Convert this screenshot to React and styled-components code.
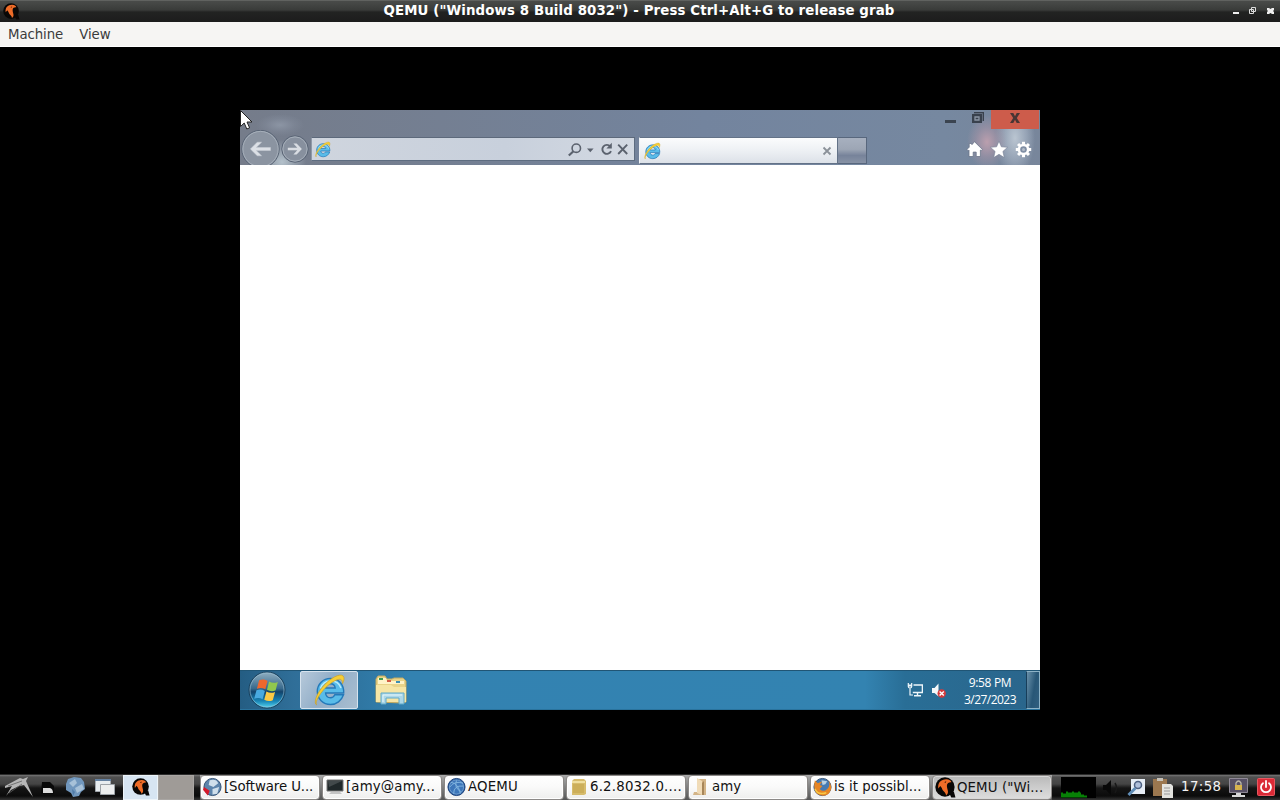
import React from 'react';
import styled, { createGlobalStyle, css } from 'styled-components';

const GlobalStyle = createGlobalStyle`
  * { box-sizing: border-box; }
  html, body { margin: 0; padding: 0; background: #000; overflow: hidden; }
  svg { display: block; flex: none; }
`;

const Desktop = styled.div`
  width: 1280px;
  height: 800px;
  display: flex;
  flex-direction: column;
  background: #000;
  font-family: "DejaVu Sans", sans-serif;
  font-size: 13.33px;
`;

/* ---------- host window ---------- */

const TitleBar = styled.header`
  height: 22px;
  flex: none;
  display: grid;
  grid-template-columns: 60px 1fr 60px;
  align-items: center;
  padding: 0 5px 0 3px;
  color: #fff;
  background: linear-gradient(#777976 0, #494b49 1px, #464846 3px, #393b39 10px, #222322 12px, #1c1c1c 22px);
`;

const WindowTitle = styled.h1`
  margin: 0;
  font-size: 13.33px;
  font-weight: bold;
  letter-spacing: 0.12px;
  line-height: 21px;
  height: 22px;
  text-align: center;
  white-space: nowrap;
`;

const WindowControls = styled.div`
  display: flex;
  justify-content: flex-end;
  padding-bottom: 2px;
`;

const MenuBar = styled.nav`
  height: 25px;
  flex: none;
  display: flex;
  align-items: center;
  gap: 16px;
  padding: 1px 8px 0;
  color: #3a3b3b;
  background: #f6f5f3;
  border-bottom: 1px solid #fff;
`;

const MenuItem = styled.span`
  line-height: 20px;
  letter-spacing: -0.08px;
`;

const Display = styled.main`
  height: 727px;
  flex: none;
  padding-top: 63px;
  display: flex;
  justify-content: center;
  align-items: flex-start;
`;

const Guest = styled.div`
  position: relative;
  width: 800px;
  height: 600px;
  display: flex;
  flex-direction: column;
`;

const Pointer = styled.svg`
  position: absolute;
  left: 0;
  top: 0;
`;

/* ---------- browser ---------- */

const Chrome = styled.section`
  height: 55px;
  flex: none;
  display: flex;
  flex-direction: column;
  overflow: hidden;
  background:
    radial-gradient(ellipse 24px 11px at 40px 15px, #8c95a4 0, #8790a060 60%, transparent 100%),
    radial-gradient(ellipse 24px 22px at 42px 52px, #b4c1cb 0, transparent 100%),
    radial-gradient(ellipse 20px 27px at 747px 32px, #bb9fae 0, #ab95a780 55%, transparent 100%),
    radial-gradient(ellipse 20px 38px at 775px 28px, #bac5d1 0, #a3b0c1aa 60%, transparent 100%),
    linear-gradient(90deg, #757c8a, #747f92 25%, #73849e 58%, #7688a0 88%, #78869b);
`;

const CaptionRow = styled.div`
  height: 20px;
  flex: none;
  display: flex;
  justify-content: flex-end;
  align-items: flex-start;
  padding-right: 1px;
`;

const CloseButton = styled.div`
  width: 48px;
  height: 19px;
  display: flex;
  justify-content: center;
  padding-top: 3px;
  background: #cd5c4b;
`;

const NavRow = styled.div`
  height: 35px;
  flex: none;
  display: flex;
  align-items: flex-start;
  padding-left: 1px;
`;

const NavButtons = styled.div`
  display: flex;
  gap: 1px;
`;

const AddressBar = styled.div`
  width: 324px;
  height: 24px;
  margin: 7px 4px 0 2px;
  display: flex;
  align-items: center;
  justify-content: space-between;
  padding: 1px 5px 0 2px;
  background: linear-gradient(90deg, #cfd5de, #c8d0dc 60%, #d3d9e2);
  border: 1px solid #5d6c80;
  border-top-color: #5d697b;
  border-left-color: #8f99a8;
`;

const BrowserTab = styled.div`
  width: 199px;
  height: 27px;
  margin-top: 7px;
  display: flex;
  align-items: center;
  justify-content: space-between;
  padding: 0 5px 0 3px;
  border: 1px solid #637287;
  border-left-color: #f0f3f6;
  background: linear-gradient(#fbfcfd, #eceff3 55%, #dce1e8);
`;

const NewTab = styled.div`
  width: 29px;
  height: 27px;
  margin-top: 7px;
  border: 1px solid #58677d;
  border-left: 0;
  background: linear-gradient(#a7b0bf, #9da6b5 45%, #77839a 70%, #8792a5);
`;

const Tools = styled.div`
  margin: 11px 8px 0 auto;
  display: flex;
  gap: 7px;
`;

const Page = styled.div`
  flex: 1;
  background: #fff;
`;

/* ---------- guest taskbar ---------- */

const GuestBar = styled.footer`
  height: 40px;
  flex: none;
  display: flex;
  border-top: 1px solid #205575;
  border-bottom: 1px solid #2a739d;
  background: linear-gradient(90deg, #245d83 0, #306f99 55px, #2f76a2 120px, #3382b1 170px, #3383b1 625px, #296e96 665px, #2a658b 100%);
`;

const StartButton = styled.div`
  width: 60px;
  padding: 0 0 0 8px;
`;

const PinnedApp = styled.div`
  width: ${(p) => (p.$active ? 58 : 66)}px;
  display: flex;
  justify-content: center;
  align-items: center;
  ${(p) => p.$active && css`
    border: 1px solid #d6e3ee;
    border-radius: 2px;
    background: linear-gradient(120deg, #b6c9da, #92aec8 45%, #a9bed0);
  `}
`;

const GuestTray = styled.div`
  margin-left: auto;
  display: flex;
  align-items: center;
  gap: 7px;
`;

const GuestClock = styled.div`
  width: 72px;
  padding-top: 1px;
  text-align: center;
  color: #fff;
  font: 12px/17px "Open Sans", "Noto Sans", sans-serif;
  letter-spacing: -0.53px;
`;

const ClockTime = styled.div`
  letter-spacing: -0.35px;
`;

const ShowDesktop = styled.div`
  width: 14px;
  align-self: stretch;
  margin-left: -7px;
  border: 1px solid #8db2c6;
  border-left-color: #173e5a;
  background: linear-gradient(100deg, #6a91aa, #285777 55%, #315f7f);
`;

/* ---------- host panel ---------- */

const Panel = styled.footer`
  height: 26px;
  flex: none;
  display: flex;
  color: #111;
  border-top: 1px solid #2c2c2c;
  background: linear-gradient(#777, #505050 2px, #444 9px, #151515 13px, #0b0b0b 21px, #353535);
`;

const Launchers = styled.div`
  width: 123px;
  display: flex;
  align-items: center;
  padding-left: 5px;
`;

const Workspace = styled.div`
  width: ${(p) => (p.$active ? 35 : 36)}px;
  display: flex;
  align-items: center;
  justify-content: center;
  padding-bottom: 2px;
  background: ${(p) => (p.$active ? '#d7e5f2' : '#9f9b97')};
  border: 1px solid ${(p) => (p.$active ? '#edf4f9' : '#a9a6a3')};
`;

const TaskList = styled.div`
  display: flex;
  gap: 2px;
  margin-left: 6px;
  background: linear-gradient(#aaa, #555);
`;

const Task = styled.div`
  width: 120px;
  height: 25px;
  display: flex;
  align-items: center;
  gap: ${(p) => p.$gap ?? 2}px;
  padding: ${(p) => (p.$active ? '1px' : '0')} 2px ${(p) => (p.$active ? '1px' : '2px')};
  white-space: nowrap;
  border: 1px solid #8c8987;
  border-radius: 4px;
  background: ${(p) => (p.$active ? 'linear-gradient(#b9b9b9, #d0d0d0 60%, #dddddd)' : 'linear-gradient(#fff, #fafafa 45%, #eeeeed)')};
  box-shadow: inset 0 0 0 1px ${(p) => (p.$active ? '#d8d8d8' : '#fff')};
`;

const TaskLabel = styled.span`
  line-height: 20px;
  letter-spacing: ${(p) => p.$spacing ?? 0}px;
`;

const HostTray = styled.div`
  flex: 1;
  display: flex;
  align-items: center;
  padding: 0 5px 0 8px;
`;

const HostClock = styled.time`
  width: 47px;
  margin-left: 7px;
  padding-bottom: 2px;
  color: #f4f4f4;
  letter-spacing: 0.4px;
`;

const PowerButton = styled.div`
  margin-left: auto;
  padding-bottom: 1px;
`;

/* ---------- drawings ---------- */

const QemuIcon = ({ size = 20 }) => (
  <svg width={size} height={size} viewBox="0 0 20 20">
    <circle cx="9.5" cy="9.5" r="9.2" fill="#090706" />
    <path d="M13 14h5l1.5 5.5h-4z" fill="#090706" />
    <path d="M3.2 11C2.2 5.5 6 2 11 2.2c2.4.1 4.4 1.2 4.6 2.8-2.2-.3-4 .8-4.2 2.6-.3 2 .5 3.6.9 5.8.3 1.8-.3 3.3-1.8 4.1 0-3-3.3-3.6-4-7L5 8.5z" fill="#ee6c28" />
    <path d="M8.8 4.9l2-1-.6 1.8z" fill="#502006" />
  </svg>
);

const IeIcon = ({ size }) => (
  <svg width={size} height={size} viewBox="0 0 34 34">
    <path d="M31.5 21.8C29.6 27.6 24.5 31.5 18.5 31.5 11 31.5 5.3 25.8 5.3 18.5S11 5.4 18.6 5.4c8 0 13.5 6 13.1 14.6H13.6c.2 3 2.1 4.8 4.9 4.8 2 0 3.4-1 4.3-3zM13.7 15h9.5c-.3-2.7-2-4.3-4.7-4.3-2.6 0-4.4 1.6-4.8 4.3z" fill="#59bce9" stroke="#2479b9" strokeWidth="1.4" />
    <path d="M8.4 15.5C10.2 10.8 13.5 8 18.5 7.8c5.5 0 9 3 10.5 7.3" fill="none" stroke="#b9ecfc" strokeWidth="1.4" />
    <path d="M4.8 32C1.2 30.2 4.4 20.7 11.5 12.8 18.7 4.7 28 .1 31 2.9c1.7 1.5 1.2 4.6-.5 7.8.1-3.5-1.4-5-4.3-4.2C21.4 7.7 15.2 12.5 10.6 18 5.2 24.5 2.8 30.8 4.8 32z" fill="#f6ce36" stroke="#c8a12a" strokeWidth=".7" />
  </svg>
);

const RoundNav = ({ size, big }) => (
  <svg width={size} height="38" viewBox={`0 0 ${size} 38`}>
    <circle cx={size / 2} cy="19" r={size / 2 - 0.8} fill={big ? '#8b94a1' : '#87909e'} stroke="#596475" />
    <circle cx={size / 2} cy="19" r={size / 2 - 1.9} fill="none" stroke="#a6afba" />
    {big
      ? <path d="M29.5 17.5v3H15.2l5.4 5.3h-4.4L9.4 19l6.8-6.8h4.4l-5.4 5.3z" fill="#dce0e6" stroke="#c8ced6" strokeWidth=".5" />
      : <path d="M6.8 17.8v2.4h9.5l-3.9 4.2h3.2l5.3-5.4-5.3-5.4h-3.2l3.9 4.2z" fill="#d9dde3" />}
  </svg>
);

const AddressTools = () => (
  <svg width="62" height="18" viewBox="0 0 62 18" fill="none" stroke="#5b626e">
    <circle cx="9.3" cy="7.2" r="4.2" strokeWidth="1.6" />
    <path d="M6.2 10.5L1.8 14.5" strokeWidth="2.2" />
    <path d="M20 7.5h6.6l-3.3 3.7z" fill="#5b626e" stroke="none" />
    <path d="M43.3 5.4A4.5 4.5 0 1 0 44 10.2" strokeWidth="1.9" />
    <path d="M44.8 1.8v5.6h-5.4z" fill="#5b626e" stroke="none" />
    <path d="M51.2 3.6l9 9.4m0-9.4l-9 9.4" strokeWidth="1.9" />
  </svg>
);

const CaptionGlyphs = () => (
  <svg width="51" height="19" viewBox="0 0 51 19">
    <path d="M5 10h11v3H5z" fill="#3b4450" />
    <path d="M34 2h10v9h-2v2H32V4h2z" fill="#39414d" />
    <path d="M35 7h4v3h-4z" fill="none" stroke="#8b95a4" strokeWidth="1.3" />
    <path d="M33.5 3.5h9v8" fill="none" stroke="#717c8e" strokeWidth=".7" />
  </svg>
);

const HomeIcon = () => (
  <svg width="17" height="17" viewBox="0 0 17 17">
    <path d="M8.5.7L16.4 8.5l-1.3 1.2-.7-.7v6.5H10.2v-4.4H7.2v4.4H3V9l-.8.7L.9 8.5 3.2 6.2V2.5h2.7v1.2z" fill="#fff" stroke="#6b7589" strokeWidth=".8" />
  </svg>
);

const StarIcon = () => (
  <svg width="18" height="17" viewBox="0 0 18 17">
    <path d="M9 .2l2.4 5.6 6.2.5-4.7 4.1 1.4 6.2L9 13.3l-5.3 3.3 1.4-6.2L.4 6.3l6.2-.5z" fill="#fff" stroke="#778196" strokeWidth=".6" />
  </svg>
);

const GearIcon = () => (
  <svg width="17" height="17" viewBox="0 0 17 17">
    <g fill="#fff">
      {[0, 45, 90, 135].map((a) => (
        <rect key={a} x="7" y=".8" width="3" height="15.4" transform={`rotate(${a} 8.5 8.5)`} />
      ))}
      <circle cx="8.5" cy="8.5" r="5.8" />
    </g>
    <circle cx="8.5" cy="8.5" r="3.3" fill="#7f8ea4" />
    <circle cx="8.5" cy="8.5" r="1.5" fill="#b4bdca" />
  </svg>
);

const StartOrb = () => (
  <svg width="38" height="38" viewBox="0 0 38 38">
    <defs>
      <linearGradient id="orb" x2="0" y2="1">
        <stop offset="0" stopColor="#91afc1" />
        <stop offset=".46" stopColor="#37698c" />
        <stop offset=".55" stopColor="#12436b" />
        <stop offset=".8" stopColor="#1783b4" />
        <stop offset="1" stopColor="#55d7f2" />
      </linearGradient>
    </defs>
    <circle cx="19" cy="19" r="18" fill="url(#orb)" stroke="#193f5a" />
    <circle cx="19" cy="19" r="17" fill="none" stroke="#9bc1d5" strokeOpacity=".6" />
    <g transform="translate(-3.3 -4.1) scale(1.2)">
      <path d="M12 11.2c2.7-1.2 5-.9 7 .5l-1.8 7c-2.3-1.4-4.5-1.6-7-.5z" fill="#ef672d" />
      <path d="M20.3 12.2c2.4 1.4 4.8 1.4 7.3.3l-1.8 7c-2.5 1.1-4.9.9-7.2-.4z" fill="#91c84e" />
      <path d="M9.8 19.5c2.5-1.1 4.8-.9 7 .5l-1.9 7c-2.3-1.4-4.5-1.5-7-.4z" fill="#48a9df" />
      <path d="M18.1 20.5c2.3 1.3 4.6 1.5 7.2.4l-1.9 6.9c-2.4 1.1-4.8.9-7.1-.5z" fill="#fbc944" />
    </g>
  </svg>
);

const ExplorerIcon = () => (
  <svg width="34" height="32" viewBox="0 0 34 32">
    <path d="M2 28V5l2-3h7l2 3h5l2-1h9l3 3v21l-3 1z" fill="#e9d389" stroke="#c3aa60" />
    <path d="M4 4h8l1 3h17v3H4z" fill="#fff3c7" />
    <path d="M5 4h4v2H5z" fill="#409b52" /><path d="M13 6h4v2h-4z" fill="#d35a45" /><path d="M22 7h4v2h-4z" fill="#3c8eb4" />
    <path d="M2 11h15l3 2h12v15H2z" fill="#f6e5a5" />
    <path d="M7 30V19h23v11h-5v-6H12v6z" fill="#add7e8" stroke="#5ea9c9" />
    <path d="M9 28v-7h19" fill="none" stroke="#e6f8fc" />
  </svg>
);

const NetworkIcon = () => (
  <svg width="16" height="16" viewBox="0 0 16 16" fill="none" stroke="#eef6fa">
    <path d="M6.5 3h8.9v7.5H5.8M10.5 10.5v3M7 13.7h7" strokeWidth="1.4" />
    <path d="M1.3 1v3.5q0 1.5 1.7 1.5t1.7-1.5V1M3 6v7h3" strokeWidth="1.2" />
    <path d="M1 3.5h4" strokeWidth="2" />
  </svg>
);

const MutedIcon = () => (
  <svg width="17" height="16" viewBox="0 0 17 16">
    <path d="M2 6h2.5l4-4.5v13l-4-3.5H2z" fill="#f4f7f8" />
    <circle cx="11.7" cy="11.5" r="4.2" fill="#d63a3d" />
    <path d="M9.6 9.4l4.2 4.2m0-4.2l-4.2 4.2" stroke="#fff" strokeWidth="1.4" />
  </svg>
);

const LauncherIcons = () => (
  <svg width="115" height="24" viewBox="0 0 115 24">
    <path d="M0 10l15-8 3 1 5-2-2 4 7 16-9-12-5 1-8 4-5 6 6-10-7 2z" fill="#b7b7b7" />
    <path d="M3 10l14-5M4 17l13-9" stroke="#606060" strokeWidth=".8" />
    <path d="M37 6h8l4 4v8H36z" fill="#080808" /><path d="M38 12h7q3 1 3 5H38z" fill="#dcdcdc" />
    <path d="M63 3l6-2 7 1 3 4 1 7-4 3-2 4-6 1-2-4-5-3V8z" fill="#7197bd" />
    <path d="M64 7l6-4 2 4-4 4zm6 5l7-4 2 5-7 4z" fill="#a7c1d8" />
    <path d="M67 13l3 3-2 4z" fill="#507ca8" />
    <path d="M90.5 3.5h15v12h-15z" fill="#e7ecef" stroke="#a2a8ae" /><path d="M90 3h16v2H90z" fill="#6380a0" />
    <path d="M95.5 8.5h14v10h-14z" fill="#eceeee" stroke="#9ca2a7" />
  </svg>
);

const GlobeIcon = ({ kind }) => {
  const fox = kind === 'fox';
  return (
    <svg width="19" height="20" viewBox="0 0 20 20">
      <circle cx="10" cy="10" r="9" fill={fox ? '#467bb3' : kind === 'aqemu' ? '#285da2' : '#5d84ab'} stroke={kind === 'aqemu' ? '#183e77' : '#324f72'} />
      {kind === 'aqemu' && <circle cx="10" cy="10" r="7.5" fill="#3d76b9" stroke="#7fabd6" strokeWidth=".8" />}
      {kind === 'aqemu' && <path d="M3 10q5-7 14-4M4 5q8 1 10 12M7 17q0-9 10-8M10 3q-3 8 5 12" fill="none" stroke="#82b5df" />}
      {kind === 'web' && <path d="M7 3q7-2 9 3l-5 4-5-2zM10 12l7-2-2 7-5 1z" fill="#d0dfeb" />}
      {kind === 'web' && <path d="M1 10l6 4-2 5-5-6z" fill="#d51929" />}
      {fox && <path d="M2 3l3 3 5-2-3 4 3 1-3 3q4 4 8 0 4-4 1-9 4 4 3 9-2 8-10 7Q-1 17 2 3z" fill="#e78524" />}
      {fox && <path d="M2 12q3 7 12 4" fill="none" stroke="#f7c844" strokeWidth="1.5" />}
      {fox && <path d="M9 3l6 1-2 3-3 1z" fill="#bad2e2" />}
    </svg>
  );
};

const TerminalIcon = () => (
  <svg width="19" height="18" viewBox="0 0 19 18">
    <path d="M2 2h16v11H2z" fill="#20282a" stroke="#777" /><path d="M3 3h14L4 9z" fill="#42494b" /><path d="M6 14h9l2 2H4z" fill="#c4c4c4" />
  </svg>
);

const DriveIcon = () => (
  <svg width="20" height="18" viewBox="0 0 20 18">
    <path d="M3 3l2-2h10l2 2v13l-2 1H3z" fill="#d7bc6c" /><path d="M3 3h13v2H3z" fill="#f0df9f" /><path d="M4 6h11v9H4z" fill="#ccae59" />
  </svg>
);

const FolderIcon = () => (
  <svg width="18" height="20" viewBox="0 0 18 20">
    <path d="M6 2h9v16H2l1-3h3z" fill="#d3b487" /><path d="M6 1l5 3v14l-5-2z" fill="#f0dbb7" /><path d="M11 6l2-2v14h-2z" fill="#a7865a" />
  </svg>
);

const TrayIcons = () => (
  <svg width="114" height="24" viewBox="0 0 114 24">
    <path d="M1 1h35v21H1z" fill="#000" />
    <path d="M1 21.5v-5h2v1h3v-2h2v1h4v-1h2v1h4v-1h2v1h1v2h3v1h3v2z" fill="#078006" />
    <path d="M43 9h3l5-5v15l-5-5h-3z" fill="#080808" /><path d="M55 7q3 5 0 10" fill="none" stroke="#181818" strokeWidth="1.5" />
    <path d="M71 3h14v15H71z" fill="#e6edf5" /><circle cx="78" cy="9" r="3.5" fill="#aebfda" stroke="#4d6080" strokeWidth="1.5" />
    <path d="M75.5 12l-7 7" stroke="#608db7" strokeWidth="3" />
    <path d="M93 3h14v17H93z" fill="#9b774f" /><path d="M97 2h6v3h-6z" fill="#c4c0b7" />
    <path d="M102 8h9l2 2v12h-11z" fill="#e3e3df" /><path d="M104 12h6m-6 3h6m-6 3h6" stroke="#999" />
  </svg>
);

const LockScreenIcon = () => (
  <svg width="21" height="22" viewBox="0 0 21 22">
    <path d="M1.5 1.5h18v14h-18z" fill="#575064" stroke="#8f8996" /><path d="M8 16h5v2h4v2H4v-2h4z" fill="#d8d8d8" />
    <path d="M8 9V6q2.5-4 5 0v3" fill="none" stroke="#bdb9aa" strokeWidth="1.3" /><path d="M7 8h7v5H7z" fill="#d7b44d" />
  </svg>
);

const PowerIcon = () => (
  <svg width="18" height="18" viewBox="0 0 18 18">
    <rect x=".5" y=".5" width="17" height="17" rx="1" fill="#db2a36" stroke="#e65760" />
    <path d="M6 5.2a5 5 0 1 0 6 0M9 3v6" fill="none" stroke="#fff" strokeWidth="1.8" strokeLinecap="round" />
  </svg>
);

const tasks = [
  { label: '[Software U...', icon: <GlobeIcon kind="web" />, spacing: -0.1 },
  { label: '[amy@amy...', icon: <TerminalIcon />, spacing: 0.15 },
  { label: 'AQEMU', icon: <GlobeIcon kind="aqemu" />, spacing: 0.15 },
  { label: '6.2.8032.0....', icon: <DriveIcon />, gap: 1, spacing: 0.2 },
  { label: 'amy', icon: <FolderIcon />, gap: 3 },
  { label: 'is it possibl...', icon: <GlobeIcon kind="fox" />, spacing: 0.03 },
  { label: 'QEMU ("Wi...', icon: <QemuIcon size={21} />, gap: 1, spacing: 0.1, active: true },
];

export default function App() {
  return (
    <Desktop>
      <GlobalStyle />
      <TitleBar>
        <QemuIcon size={17} />
        <WindowTitle>QEMU ("Windows 8 Build 8032") - Press Ctrl+Alt+G to release grab</WindowTitle>
        <WindowControls>
          <svg width="46" height="12" viewBox="0 0 46 12">
            <path d="M4 8h6v2H4z" fill="#eee" />
            <path d="M22.5 3.5h4v4h-4zM20.5 5.5h4v4h-4z" fill="none" stroke="#ddd" />
            <path d="M38 4h2l1.5 1L43 4h2v2l-1 1 1 1v2h-2l-1.5-1L40 10h-2V8l1-1-1-1z" fill="#eee" />
          </svg>
        </WindowControls>
      </TitleBar>
      <MenuBar>
        <MenuItem>Machine</MenuItem>
        <MenuItem>View</MenuItem>
      </MenuBar>
      <Display>
        <Guest>
          <Chrome>
            <CaptionRow>
              <CaptionGlyphs />
              <CloseButton>
                <svg width="12" height="11" viewBox="0 0 12 11"><path d="M1 0h3.3L6 3.3 7.7 0H11L7.8 5l3.2 5H7.7L6 6.7 4.3 10H1l3.2-5z" fill="#493534" /></svg>
              </CloseButton>
            </CaptionRow>
            <NavRow>
              <NavButtons>
                <RoundNav size={39} big />
                <RoundNav size={28} />
              </NavButtons>
              <AddressBar>
                <IeIcon size={17} />
                <AddressTools />
              </AddressBar>
              <BrowserTab>
                <IeIcon size={18} />
                <svg width="10" height="10" viewBox="0 0 10 10"><path d="M1.5 1.5l7 7m0-7l-7 7" stroke="#8b9199" strokeWidth="1.8" /></svg>
              </BrowserTab>
              <NewTab />
              <Tools>
                <HomeIcon />
                <StarIcon />
                <GearIcon />
              </Tools>
            </NavRow>
          </Chrome>
          <Page />
          <GuestBar>
            <StartButton><StartOrb /></StartButton>
            <PinnedApp $active><IeIcon size={34} /></PinnedApp>
            <PinnedApp><ExplorerIcon /></PinnedApp>
            <GuestTray>
              <NetworkIcon />
              <MutedIcon />
              <GuestClock>
                <ClockTime>9:58 PM</ClockTime>
                <div>3/27/2023</div>
              </GuestClock>
              <ShowDesktop />
            </GuestTray>
          </GuestBar>
          <Pointer width="14" height="22" viewBox="0 0 14 22">
            <path d="M.5.5v16l3.7-3.5 2.6 6 2.8-1.2-2.6-5.8h5z" fill="#fff" stroke="#222" />
          </Pointer>
        </Guest>
      </Display>
      <Panel>
        <Launchers><LauncherIcons /></Launchers>
        <Workspace $active><QemuIcon size={18} /></Workspace>
        <Workspace />
        <TaskList>
          {tasks.map((t) => (
            <Task key={t.label} $active={t.active} $gap={t.gap}>
              {t.icon}
              <TaskLabel $spacing={t.spacing}>{t.label}</TaskLabel>
            </Task>
          ))}
        </TaskList>
        <HostTray>
          <TrayIcons />
          <HostClock>17:58</HostClock>
          <LockScreenIcon />
          <PowerButton><PowerIcon /></PowerButton>
        </HostTray>
      </Panel>
    </Desktop>
  );
}
